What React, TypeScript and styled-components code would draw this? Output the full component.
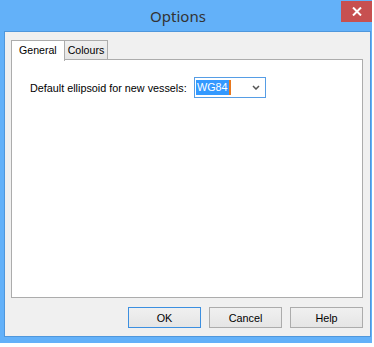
import styled, { createGlobalStyle } from "styled-components";

const GlobalStyle = createGlobalStyle`
  html, body {
    margin: 0;
    padding: 0;
    background: #ffffff;
  }
  body {
    font-family: "Liberation Sans", Arial, sans-serif;
  }
`;

// Windows 8 style "Options" dialog: blue frame, tab control with one page, and a button row.
export default function App() {
  return (
    <>
      <GlobalStyle />
      <Window>
        <TitleBar>
          <Title>Options</Title>
          <CloseButton aria-label="Close">
            <svg width="10" height="9" viewBox="0 0 10 9">
              <path d="M1 0.5 L9 8.5 M9 0.5 L1 8.5" stroke="#ffffff" strokeWidth="2" />
            </svg>
          </CloseButton>
        </TitleBar>
        <Client>
          <TabStrip>
            <Tab $active>General</Tab>
            <Tab>Colours</Tab>
          </TabStrip>
          <TabPage>
            <FieldRow>
              <FieldLabel>Default ellipsoid for new vessels:</FieldLabel>
              <Combo>
                <Selection>WG84</Selection>
                <Caret />
                <Chevron width="8" height="5" viewBox="0 0 8 5">
                  <path d="M1 1 L4 4 L7 1" fill="none" stroke="#555555" strokeWidth="1.5" />
                </Chevron>
              </Combo>
            </FieldRow>
          </TabPage>
          <ButtonRow>
            <DialogButton $default>OK</DialogButton>
            <DialogButton>Cancel</DialogButton>
            <DialogButton>Help</DialogButton>
          </ButtonRow>
        </Client>
      </Window>
    </>
  );
}

const Window = styled.div`
  width: 372px;
  height: 343px;
  background: #63b1f9;
  display: flex;
  flex-direction: column;
  box-sizing: border-box;
  padding: 0 1px 6px 4px;
`;

const TitleBar = styled.div`
  height: 31px;
  display: flex;
  align-items: flex-start;
  margin-left: -4px;
  margin-right: -1px;
`;

const Title = styled.div`
  flex: 1;
  padding-left: 15px;
  padding-top: 6px;
  text-align: center;
  font-family: "Noto Sans", "Open Sans", sans-serif;
  font-size: 15px;
  line-height: 20px;
  color: #333333;
`;

const CloseButton = styled.div`
  width: 31px;
  height: 21px;
  margin-top: 1px;
  background: #c75050;
  display: flex;
  align-items: center;
  justify-content: center;
`;

const Client = styled.div`
  flex: 1;
  background: #f0f0f0;
  border: 1px solid #4f97dc;
  display: flex;
  flex-direction: column;
  padding: 8px 7px 8px 6px;
`;

const TabStrip = styled.div`
  height: 20px;
  display: flex;
  align-items: flex-end;
  margin-bottom: -1px;
`;

const Tab = styled.div<{ $active?: boolean }>`
  box-sizing: border-box;
  height: ${({ $active }) => ($active ? "21px" : "19px")};
  margin-bottom: ${({ $active }) => ($active ? "-1px" : "1px")};
  margin-left: ${({ $active }) => ($active ? "0" : "-1px")};
  padding: ${({ $active }) => ($active ? "3px 7px 0 7px" : "3px 3px 0 3px")};
  border: 1px solid #acacac;
  border-bottom: none;
  background: ${({ $active }) => ($active ? "#ffffff" : "linear-gradient(#f0f0f0, #e5e5e5)")};
  position: relative;
  z-index: ${({ $active }) => ($active ? 1 : 0)};
  font-size: 10.6px;
  line-height: 13px;
  color: #000000;
`;

const TabPage = styled.div`
  flex: 1;
  background: #ffffff;
  border: 1px solid #acacac;
  padding: 17px 0 0 18px;
`;

const FieldRow = styled.div`
  display: flex;
  align-items: center;
`;

const FieldLabel = styled.div`
  width: 164px;
  font-size: 10.8px;
  color: #000000;
  padding-top: 1px;
`;

const Combo = styled.div`
  box-sizing: border-box;
  width: 72px;
  height: 21px;
  border: 1px solid #569de5;
  background: #ffffff;
  display: flex;
  align-items: center;
  padding-left: 1px;
`;

const Selection = styled.span`
  background: #3399ff;
  color: #ffffff;
  font-size: 10.8px;
  line-height: 15px;
  padding: 0 1px;
`;

const Caret = styled.span`
  width: 2px;
  height: 15px;
  background: #e8781e;
`;

const Chevron = styled.svg`
  margin-left: auto;
  margin-right: 5px;
`;

const ButtonRow = styled.div`
  display: flex;
  justify-content: flex-end;
  gap: 8px;
  margin-top: 9px;
`;

const DialogButton = styled.div<{ $default?: boolean }>`
  box-sizing: border-box;
  width: 73px;
  height: 21px;
  border: 1px solid ${({ $default }) => ($default ? "#3c8fe0" : "#acacac")};
  background: linear-gradient(#f0f0f0, #e5e5e5);
  display: flex;
  align-items: center;
  justify-content: center;
  font-size: 10.8px;
  color: #000000;
`;
